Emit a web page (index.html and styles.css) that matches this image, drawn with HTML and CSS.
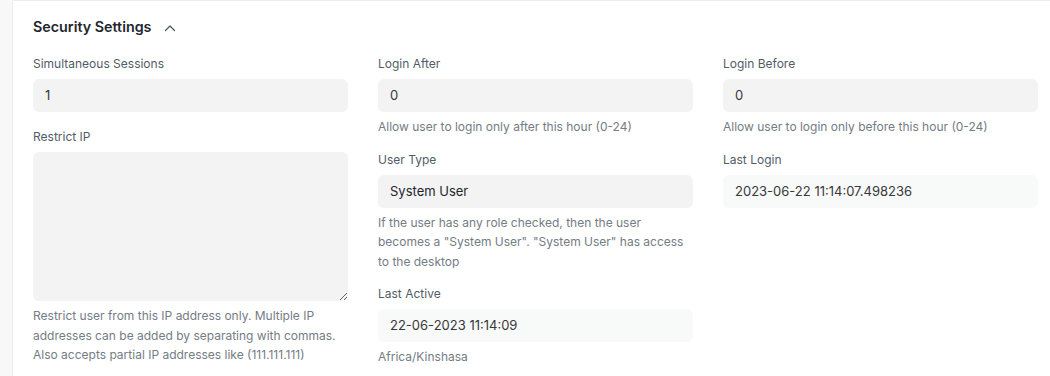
FILE: index.html
```html
<!DOCTYPE html>
<html lang="en">
<head>
    <meta charset="UTF-8">
    <meta name="viewport" content="width=device-width, initial-scale=1.0">
    <title>Security Settings</title>
    <link rel="stylesheet" href="styles.css">
</head>
<body>
    <div class="page">
        <div class="section">
            <div class="section-head">
                <h4>Security Settings</h4>
                <svg class="chevron" width="14" height="14" viewBox="0 0 14 14">
                    <path d="M2.5 9.5 L7 5 L11.5 9.5" fill="none" stroke="#4c5a67" stroke-width="1.3" stroke-linecap="round" stroke-linejoin="round"/>
                </svg>
            </div>

            <div class="columns">
                <div class="column">
                    <div class="field">
                        <label>Simultaneous Sessions</label>
                        <div class="control">1</div>
                    </div>
                    <div class="field">
                        <label>Restrict IP</label>
                        <textarea class="control textarea"></textarea>
                        <p class="help">Restrict user from this IP address only. Multiple IP addresses can be added by separating with commas. Also accepts partial IP addresses like (111.111.111)</p>
                    </div>
                </div>

                <div class="column">
                    <div class="field">
                        <label>Login After</label>
                        <div class="control">0</div>
                        <p class="help">Allow user to login only after this hour (0-24)</p>
                    </div>
                    <div class="field">
                        <label>User Type</label>
                        <div class="control strong">System User</div>
                        <p class="help">If the user has any role checked, then the user becomes a "System User". "System User" has access to the desktop</p>
                    </div>
                    <div class="field">
                        <label>Last Active</label>
                        <div class="control readonly">22-06-2023 11:14:09</div>
                        <p class="help">Africa/Kinshasa</p>
                    </div>
                </div>

                <div class="column">
                    <div class="field">
                        <label>Login Before</label>
                        <div class="control">0</div>
                        <p class="help">Allow user to login only before this hour (0-24)</p>
                    </div>
                    <div class="field">
                        <label>Last Login</label>
                        <div class="control readonly">2023-06-22 11:14:07.498236</div>
                    </div>
                </div>
            </div>
        </div>
    </div>
</body>
</html>
```

FILE: styles.css
```css
html, body {
    margin: 0;
    padding: 0;
    overflow: hidden;
}
body {
    font-family: Inter, "Noto Sans", sans-serif;
    font-size: 13px;
    color: #1f272e;
    background-color: #f8f8f8;
    height: 376px;
}
.page {
    padding-left: 12px;
}
.section {
    width: 1005px;
    background-color: white;
    border-left: 1px solid #ebeef0;
    border-top: 1px solid #ebeef0;
    padding: 16px 20px 20px 20px;
}
.section-head {
    display: flex;
    align-items: center;
    gap: 12px;
    height: 20px;
    margin-bottom: 17px;
}
.section-head h4 {
    margin: 0;
    font-size: 14.3px;
    font-weight: 600;
    color: #1f272e;
    line-height: 20px;
}
.chevron {
    margin-top: 1px;
}
.columns {
    display: grid;
    grid-template-columns: repeat(3, 315px);
    gap: 30px;
}
.field {
    margin-bottom: 15px;
}
label {
    display: block;
    font-size: 12px;
    color: #525c66;
    line-height: 20px;
    margin-bottom: 5px;
}
.control {
    box-sizing: border-box;
    height: 33px;
    padding: 0 12px;
    line-height: 33px;
    background-color: #f3f3f4;
    border-radius: 6px;
    color: #383838;
}
.control.strong {
    color: #1f272e;
}
.control.readonly {
    background-color: #f8f9f9;
    color: #383838;
}
.textarea {
    display: block;
    width: 100%;
    height: 149px;
    border: none;
    resize: vertical;
    font-family: inherit;
    font-size: 13px;
    outline: none;
}
.help {
    margin: 5px 0 -2px 0;
    font-size: 12px;
    color: #747c84;
    line-height: 19.5px;
}
```
